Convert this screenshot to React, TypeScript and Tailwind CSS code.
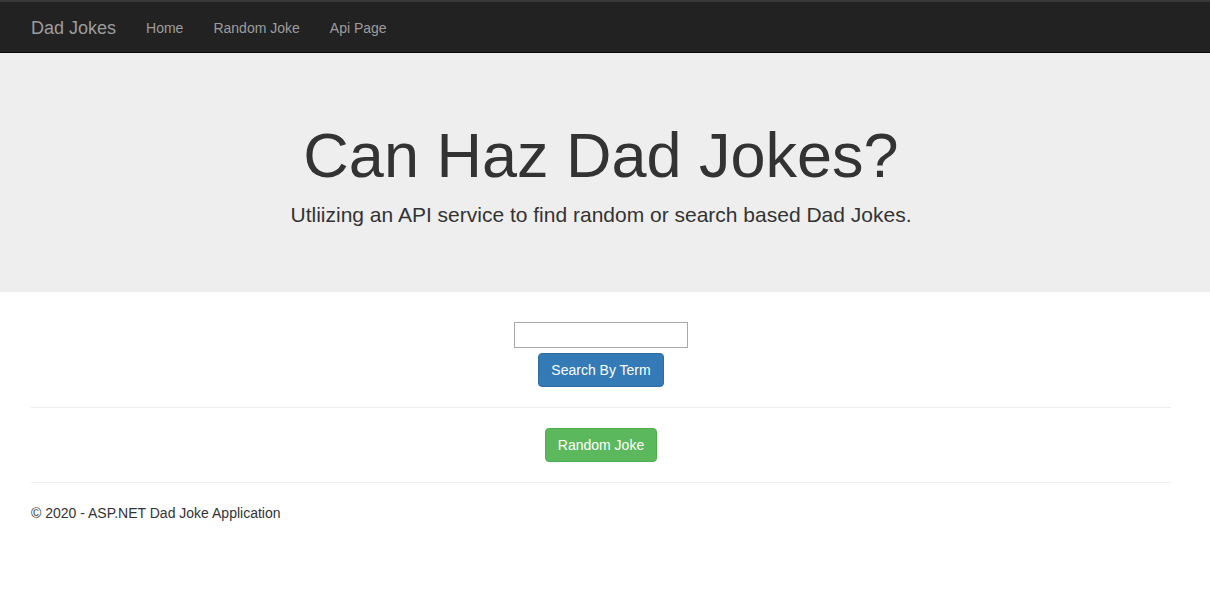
import React from 'react'

const font = { fontFamily: '"Liberation Sans", Arial, Helvetica, sans-serif' }

const NavBar = () => {
  return (
    <div>
      <div className="h-[2px] bg-[#3a3a3a]"></div>
      <nav className="h-[51px] bg-[#222222] border-b border-[#080808]">
        <div className="ml-[16px] w-[1170px] px-[15px] pt-[2px] flex flex-row items-center h-[50px]">
          <a className="text-[18px] leading-[20px] text-[#9d9d9d] pr-[15px]">Dad Jokes</a>
          <ul className="flex flex-row">
            <li><a className="block px-[15px] text-[14px] leading-[20px] text-[#9d9d9d]">Home</a></li>
            <li><a className="block px-[15px] text-[14px] leading-[20px] text-[#9d9d9d]">Random Joke</a></li>
            <li><a className="block px-[15px] text-[14px] leading-[20px] text-[#9d9d9d]">Api Page</a></li>
          </ul>
        </div>
      </nav>
    </div>
  )
}

export default function App() {
  return (
    <div style={font} className="bg-white text-[#333333] text-[14px] leading-[20px] min-h-[604px]">
      <NavBar />
      <div className="bg-[#eeeeee] pt-[48px] pb-[47px]">
        <div className="ml-[16px] w-[1170px] px-[15px] text-center">
          <h1 className="mt-[20px] mb-[10px] text-[63px] leading-[69px] text-[#333333]">Can Haz Dad Jokes?</h1>
          <p className="mb-[15px] text-[21px] leading-[30px] text-[#333333]">
            Utliizing an API service to find random or search based Dad Jokes.
          </p>
        </div>
      </div>
      <div className="ml-[16px] w-[1170px] px-[15px] mt-[30px]">
        <div className="flex flex-col items-center">
          <input type="text" className="w-[174px] h-[26px] border border-[#a9a9a9] px-[2px] bg-white" />
          <button className="mt-[5px] h-[34px] px-[12px] rounded-[4px] bg-[#337ab7] border border-[#2e6da4] text-white text-[14px] leading-[20px]">
            Search By Term
          </button>
        </div>
        <hr className="my-[20px] border-0 border-t border-[#eeeeee]" />
        <div className="flex flex-col items-center">
          <button className="h-[34px] px-[12px] rounded-[4px] bg-[#5cb85c] border border-[#4cae4c] text-white text-[14px] leading-[20px]">
            Random Joke
          </button>
        </div>
        <hr className="my-[20px] border-0 border-t border-[#eeeeee]" />
        <footer>
          <p>&copy; 2020 - ASP.NET Dad Joke Application</p>
        </footer>
      </div>
    </div>
  )
}
